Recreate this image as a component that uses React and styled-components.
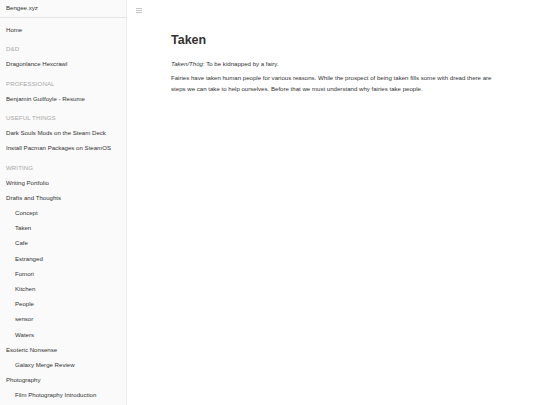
import React from 'react';
import styled, { createGlobalStyle } from 'styled-components';

const GlobalStyle = createGlobalStyle`
  html, body {
    margin: 0;
    padding: 0;
    background: #ffffff;
    font-family: 'Liberation Sans', Arial, sans-serif;
  }
`;

const nav = [
  { label: 'Home' },
  { label: 'D&D', section: true },
  { label: 'Dragonlance Hexcrawl' },
  { label: 'Professional', section: true },
  { label: 'Benjamin Guilfoyle - Resume' },
  { label: 'Useful Things', section: true },
  { label: 'Dark Souls Mods on the Steam Deck' },
  { label: 'Install Pacman Packages on SteamOS' },
  { label: 'Writing', section: true },
  { label: 'Writing Portfolio' },
  { label: 'Drafts and Thoughts' },
  { label: 'Concept', sub: true },
  { label: 'Taken', sub: true },
  { label: 'Cafe', sub: true },
  { label: 'Estranged', sub: true },
  { label: 'Fomori', sub: true },
  { label: 'Kitchen', sub: true },
  { label: 'People', sub: true },
  { label: 'sensor', sub: true },
  { label: 'Waters', sub: true },
  { label: 'Esoteric Nonsense' },
  { label: 'Galaxy Merge Review', sub: true },
  { label: 'Photography' },
  { label: 'Film Photography Introduction', sub: true },
];

const App = () => {
  return (
    <Page>
      <GlobalStyle />
      <Sidebar>
        <Brand>Bengee.xyz</Brand>
        <NavList>
          {nav.map((item) =>
            item.section ? (
              <SectionTitle key={item.label}>{item.label}</SectionTitle>
            ) : (
              <NavItem key={item.label} $sub={item.sub}>
                {item.label}
              </NavItem>
            )
          )}
        </NavList>
      </Sidebar>
      <Main>
        <MenuToggle aria-label="menu">
          <span />
          <span />
          <span />
        </MenuToggle>
        <Article>
          <Title>Taken</Title>
          <Paragraph>
            <em>Taken/Thóg</em>: To be kidnapped by a fairy.
          </Paragraph>
          <Paragraph>
            Fairies have taken human people for various reasons. While the prospect of being
            taken fills some with dread there are steps we can take to help ourselves. Before
            that we must understand why fairies take people.
          </Paragraph>
        </Article>
      </Main>
    </Page>
  );
};

export default App;

const Page = styled.div`
  display: flex;
  width: 540px;
  height: 405px;
  overflow: hidden;
`;

const Sidebar = styled.aside`
  flex: 0 0 126px;
  background: #fafafa;
  border-right: 1px solid #ececec;
  display: flex;
  flex-direction: column;
  overflow: hidden;
`;

const Brand = styled.div`
  height: 17px;
  line-height: 15px;
  padding-left: 6px;
  font-size: 6.1px;
  color: #333;
  border-bottom: 1px solid #e6e6e6;
`;

const NavList = styled.div`
  padding-top: 4px;
  display: flex;
  flex-direction: column;
`;

const NavItem = styled.div`
  height: 15.2px;
  line-height: 15.2px;
  padding-left: ${(p) => (p.$sub ? '15px' : '6px')};
  font-size: 6.1px;
  color: #333;
  white-space: nowrap;
`;

const SectionTitle = styled.div`
  margin-top: 4px;
  height: 15.2px;
  line-height: 15.2px;
  padding-left: 6px;
  font-size: 6.1px;
  color: #a8a8a8;
  text-transform: uppercase;
  letter-spacing: 0.1px;
`;

const Main = styled.main`
  flex: 1;
  position: relative;
  padding: 0 0 0 44px;
`;

const MenuToggle = styled.div`
  position: absolute;
  top: 8px;
  left: 9px;
  width: 6px;
  height: 5px;
  display: flex;
  flex-direction: column;
  justify-content: space-between;

  span {
    display: block;
    height: 1px;
    background: #c4c4c4;
  }
`;

const Article = styled.article`
  max-width: 325px;
  padding-top: 33px;
  color: #333;
`;

const Title = styled.h1`
  margin: 0 0 11px;
  font-size: 12.5px;
  line-height: 14.4px;
  font-weight: 700;
  color: #333;
`;

const Paragraph = styled.p`
  margin: 0 0 3px;
  font-size: 6.1px;
  line-height: 11px;
  color: #333;

  em {
    font-style: italic;
  }
`;
